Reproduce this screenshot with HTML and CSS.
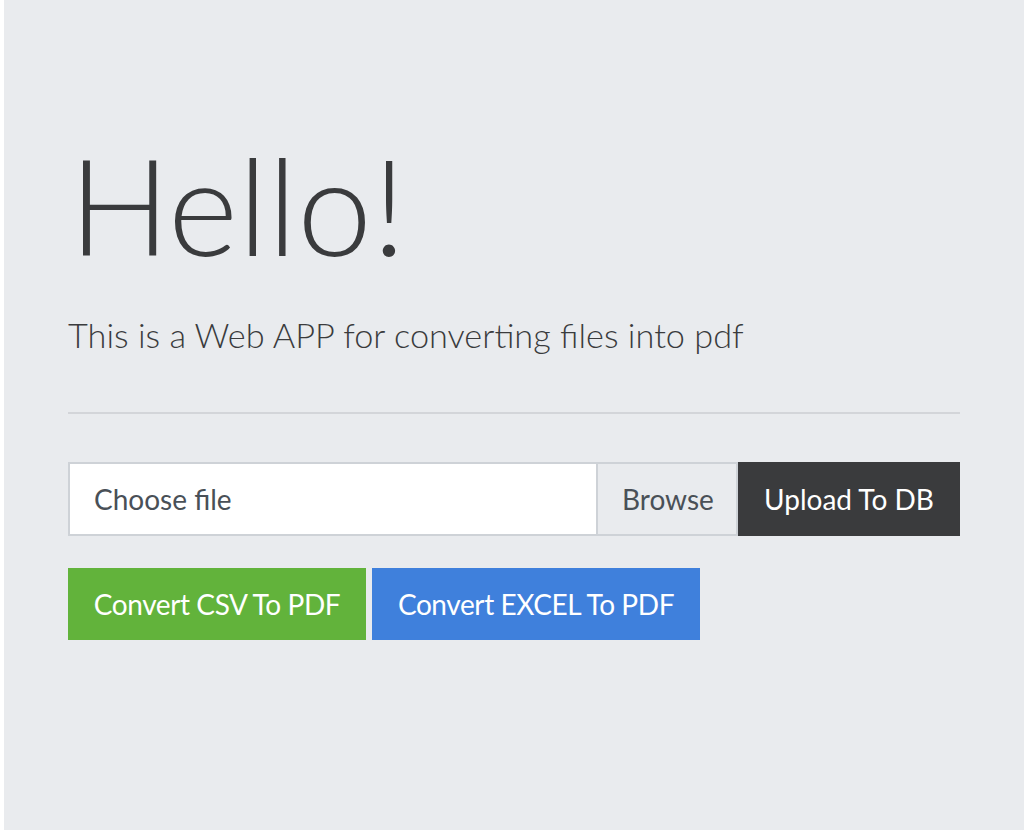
FILE: index.html
```html
<!DOCTYPE html>
<html lang="en">
<head>
<meta charset="utf-8">
<title>PDF Converter</title>
<link rel="stylesheet" href="styles.css">
</head>
<body>
<div class="jumbotron">
  <h1 class="display">Hello!</h1>
  <p class="lead">This is a Web APP for converting files into pdf</p>
  <hr class="divider">
  <form class="upload-form">
    <div class="input-group">
      <label class="custom-file">
        <span class="file-label">Choose file</span>
        <span class="browse">Browse</span>
      </label>
      <button type="button" class="btn btn-dark">Upload To DB</button>
    </div>
    <div class="actions">
      <button type="button" class="btn btn-success">Convert CSV To PDF</button>
      <button type="button" class="btn btn-primary">Convert EXCEL To PDF</button>
    </div>
  </form>
</div>
</body>
</html>
```
FILE: styles.css
```css
* { box-sizing: border-box; }
html, body { margin: 0; padding: 0; background: #ffffff; }
body {
  font-family: "Lato", "Noto Sans", sans-serif;
  color: #3a3b3d;
}
.jumbotron {
  margin-left: 4px;
  width: 1020px;
  min-height: 830px;
  background: #e9ebee;
  padding: 125px 64px 64px;
}
.display {
  margin: 0;
  font-size: 134px;
  font-weight: 300;
  line-height: 160px;
  color: #3a3b3d;
  padding-left: 1px;
}
.lead {
  margin: 30px 0 0;
  font-size: 34.3px;
  font-weight: 300;
  line-height: 40px;
  color: #3a3b3d;
}
.divider {
  margin: 57px 0 0;
  border: 0;
  height: 2px;
  background: #d3d5d9;
}
.upload-form { margin-top: 48px; }
.input-group {
  display: flex;
  height: 74px;
}
.custom-file {
  flex: 1;
  display: flex;
  border: 2px solid #ced2d7;
  background: #ffffff;
  font-size: 28px;
  color: #495057;
}
.file-label {
  flex: 1;
  display: flex;
  align-items: center;
  padding: 0 24px;
}
.browse {
  display: flex;
  align-items: center;
  padding: 0 24px;
  width: 140px;
  background: #e9ebee;
  border-left: 2px solid #ced2d7;
}
.btn {
  font-family: inherit;
  font-size: 28px;
  border: 0;
  margin: 0;
  color: #ffffff;
  padding: 0;
  white-space: nowrap;
  text-align: center;
  cursor: pointer;
}
.btn-dark { background: #3a3b3d; width: 222px; }
.actions {
  display: flex;
  gap: 6px;
  margin-top: 32px;
}
.actions .btn { height: 72px; letter-spacing: -0.4px; }
.btn-success { background: #62b33b; width: 298px; }
.btn-primary { background: #3f80dc; width: 328px; }
```
